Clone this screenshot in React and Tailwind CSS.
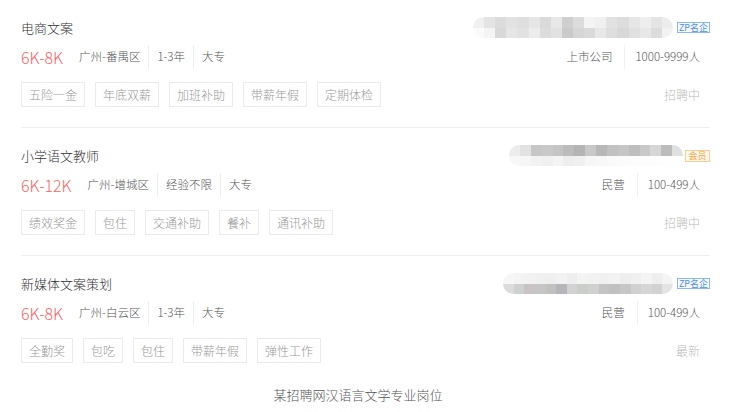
const JOBS = [
  {
    title: '电商文案',
    salary: '6K-8K',
    info: ['广州-番禺区', '1-3年', '大专'],
    tags: ['五险一金', '年底双薪', '加班补助', '带薪年假', '定期体检'],
    company: ['上市公司', '1000-9999人'],
    badge: 'zp',
    status: '招聘中',
    bar: {
      w: 'w-[200px]',
      top: ['bg-[#f0f0f0]', 'bg-[#e4e4e4]', 'bg-[#dcdcdc]', 'bg-[#e2e2e2]', 'bg-[#dedede]', 'bg-[#e6e6e6]', 'bg-[#dadada]', 'bg-[#e8e8e8]', 'bg-[#cfcfcf]', 'bg-[#dcdcdc]', 'bg-[#f4f4f4]', 'bg-[#f0f0f0]', 'bg-[#e2e2e2]', 'bg-[#dcdcdc]', 'bg-[#e6e6e6]', 'bg-[#eeeeee]', 'bg-[#e4e4e4]', 'bg-[#ececec]'],
      bottom: ['bg-[#fafafa]', 'bg-[#f4f4f4]', 'bg-[#d8d8d8]', 'bg-[#e6e6e6]', 'bg-[#e2e2e2]', 'bg-[#ececec]', 'bg-[#dcdcdc]', 'bg-[#e2e2e2]', 'bg-[#cacaca]', 'bg-[#d6d6d6]', 'bg-[#dadada]', 'bg-[#e8e8e8]', 'bg-[#dedede]', 'bg-[#d8d8d8]', 'bg-[#e0e0e0]', 'bg-[#e8e8e8]', 'bg-[#dcdcdc]', 'bg-[#f2f2f2]'],
    },
  },
  {
    title: '小学语文教师',
    salary: '6K-12K',
    info: ['广州-增城区', '经验不限', '大专'],
    tags: ['绩效奖金', '包住', '交通补助', '餐补', '通讯补助'],
    company: ['民营', '100-499人'],
    badge: 'vip',
    status: '招聘中',
    bar: {
      w: 'w-[174px]',
      top: ['bg-[#ececec]', 'bg-[#e2e2e2]', 'bg-[#c6c6c6]', 'bg-[#cbc8c9]', 'bg-[#c4c4c4]', 'bg-[#bcbcbc]', 'bg-[#b4b4b4]', 'bg-[#c8c8c8]', 'bg-[#b8b8b8]', 'bg-[#c2c2c2]', 'bg-[#c6c6c6]', 'bg-[#bebebe]', 'bg-[#c8c8c8]', 'bg-[#d6d6d6]', 'bg-[#bcbcbc]', 'bg-[#e0e0e0]'],
      bottom: ['bg-[#f8f8f8]', 'bg-[#f6f6f6]', 'bg-[#f2f2f2]', 'bg-[#f0f0f0]', 'bg-[#f4f4f4]', 'bg-[#eeeeee]', 'bg-[#f0f0f0]', 'bg-[#f6f6f6]', 'bg-[#f8f8f8]', 'bg-[#fafafa]', 'bg-[#fbfbfb]', 'bg-[#fcfcfc]', 'bg-[#fcfcfc]', 'bg-[#fdfdfd]', 'bg-[#fefefe]', 'bg-[#ffffff]'],
    },
  },
  {
    title: '新媒体文案策划',
    salary: '6K-8K',
    info: ['广州-白云区', '1-3年', '大专'],
    tags: ['全勤奖', '包吃', '包住', '带薪年假', '弹性工作'],
    company: ['民营', '100-499人'],
    badge: 'zp',
    status: '最新',
    bar: {
      w: 'w-[170px]',
      top: ['bg-[#f6f6f6]', 'bg-[#f4f4f4]', 'bg-[#f2f2f2]', 'bg-[#f0f0f0]', 'bg-[#efefef]', 'bg-[#f2f2f2]', 'bg-[#eeeeee]', 'bg-[#f4f4f4]', 'bg-[#f2f2f2]', 'bg-[#f0f0f0]', 'bg-[#f2f2f2]', 'bg-[#eeeeee]', 'bg-[#f0f0f0]', 'bg-[#f4f4f4]', 'bg-[#eeeeee]', 'bg-[#f4f4f4]'],
      bottom: ['bg-[#dcdcdc]', 'bg-[#cfd1cf]', 'bg-[#c9c3c6]', 'bg-[#c6c6c6]', 'bg-[#c0c2c0]', 'bg-[#b6b6ba]', 'bg-[#d2d2d2]', 'bg-[#cbcdcb]', 'bg-[#d0d0d0]', 'bg-[#c2c4c2]', 'bg-[#c0c0c0]', 'bg-[#c6c6c6]', 'bg-[#d0d0d0]', 'bg-[#d6d6d6]', 'bg-[#d2d2d2]', 'bg-[#e4e4e4]'],
    },
  },
]

const font = { fontFamily: '"Noto Sans CJK SC", "Noto Sans", sans-serif' }

function BlurName({ bar }) {
  return (
    <div className={`${bar.w} h-[21px] rounded-full overflow-hidden flex flex-col blur-[0.6px]`}>
      <div className="flex h-[11px]">
        {bar.top.map((c, i) => <div key={i} className={`flex-1 ${c}`} />)}
      </div>
      <div className="flex h-[10px]">
        {bar.bottom.map((c, i) => <div key={i} className={`flex-1 ${c}`} />)}
      </div>
    </div>
  )
}

function Badge({ type }) {
  if (type === 'vip') {
    return (
      <span className="ml-[2px] w-[25px] h-[12px] flex items-center justify-center border border-[#fccb8e] bg-[#fff9f0] text-[#f6a23a] text-[9px] leading-none">
        会员
      </span>
    )
  }
  return (
    <span className="ml-[4px] w-[33px] h-[11px] flex items-center justify-center border border-[#8cb8f2] bg-[#f5f9ff] text-[#4d8eea] text-[9px] leading-none">
      ZP名企
    </span>
  )
}

function JobCard({ job, last }) {
  return (
    <div className={`ml-[21px] mr-[25px] pt-[17px] pb-[20px] ${last ? '' : 'border-b border-[#eeeeee]'}`}>
      <div className="flex items-center justify-between h-[21px]">
        <span className="text-[13px] text-[#333333] font-light">{job.title}</span>
        <div className="flex items-center">
          <BlurName bar={job.bar} />
          <Badge type={job.badge} />
        </div>
      </div>
      <div className="mt-[7px] h-[24px] flex items-center justify-between">
        <div className="flex items-center h-full">
          <span className="text-[16px] text-[#ff5f5f] mr-[16px] leading-none font-light">{job.salary}</span>
          {job.info.map((t, i) => (
            <span key={t} className={`h-full flex items-center text-[11.5px] text-[#555555] font-light ${i === 0 ? 'pr-[8px]' : 'px-[8px]'} ${i < job.info.length - 1 ? 'border-r border-[#eeeeee]' : ''}`}>
              {t}
            </span>
          ))}
        </div>
        <div className="flex items-center h-full pr-[10px] text-[11.5px] text-[#555555] font-light">
          <span className="pr-[12px] h-full flex items-center border-r border-[#f0f0f0]">{job.company[0]}</span>
          <span className="pl-[10px]">{job.company[1]}</span>
        </div>
      </div>
      <div className="mt-[13px] h-[25px] flex items-center justify-between">
        <div className="flex gap-[10px] h-full">
          {job.tags.map(t => (
            <span key={t} className="h-full px-[7px] flex items-center border border-[#ebebeb] text-[12px] text-[#999999] font-light">
              {t}
            </span>
          ))}
        </div>
        <span className="pr-[10px] text-[12px] text-[#bbbbbb] font-light">{job.status}</span>
      </div>
    </div>
  )
}

export default function App() {
  return (
    <div className="w-[735px] h-[412px] bg-white overflow-hidden" style={font}>
      {JOBS.map((job, i) => <JobCard key={job.title} job={job} last={i === JOBS.length - 1} />)}
      <div className="h-[24px] flex items-center justify-center pr-[19px] text-[13px] text-[#555555] font-light">
        某招聘网汉语言文学专业岗位
      </div>
    </div>
  )
}
